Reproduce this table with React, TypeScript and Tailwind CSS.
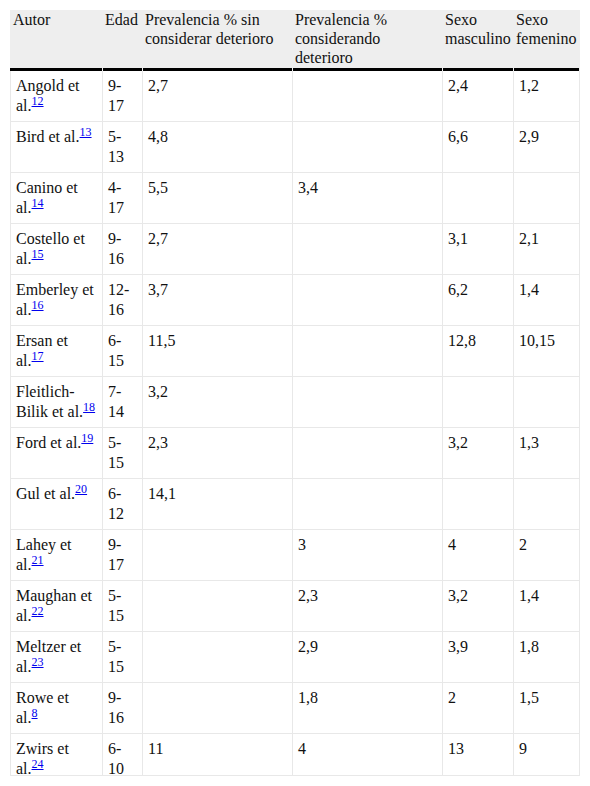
import React from 'react'

type Row = {
  autor: string[]
  ref: string
  edad: string
  sin: string
  con: string
  masc: string
  fem: string
}

// autor lines are split where the original column wraps
const ROWS: Row[] = [
  { autor: ['Angold et', 'al.'], ref: '12', edad: '9-17', sin: '2,7', con: '', masc: '2,4', fem: '1,2' },
  { autor: ['Bird et al.'], ref: '13', edad: '5-13', sin: '4,8', con: '', masc: '6,6', fem: '2,9' },
  { autor: ['Canino et', 'al.'], ref: '14', edad: '4-17', sin: '5,5', con: '3,4', masc: '', fem: '' },
  { autor: ['Costello et', 'al.'], ref: '15', edad: '9-16', sin: '2,7', con: '', masc: '3,1', fem: '2,1' },
  { autor: ['Emberley et', 'al.'], ref: '16', edad: '12-16', sin: '3,7', con: '', masc: '6,2', fem: '1,4' },
  { autor: ['Ersan et', 'al.'], ref: '17', edad: '6-15', sin: '11,5', con: '', masc: '12,8', fem: '10,15' },
  { autor: ['Fleitlich-', 'Bilik et al.'], ref: '18', edad: '7-14', sin: '3,2', con: '', masc: '', fem: '' },
  { autor: ['Ford et al.'], ref: '19', edad: '5-15', sin: '2,3', con: '', masc: '3,2', fem: '1,3' },
  { autor: ['Gul et al.'], ref: '20', edad: '6-12', sin: '14,1', con: '', masc: '', fem: '' },
  { autor: ['Lahey et', 'al.'], ref: '21', edad: '9-17', sin: '', con: '3', masc: '4', fem: '2' },
  { autor: ['Maughan et', 'al.'], ref: '22', edad: '5-15', sin: '', con: '2,3', masc: '3,2', fem: '1,4' },
  { autor: ['Meltzer et', 'al.'], ref: '23', edad: '5-15', sin: '', con: '2,9', masc: '3,9', fem: '1,8' },
  { autor: ['Rowe et', 'al.'], ref: '8', edad: '9-16', sin: '', con: '1,8', masc: '2', fem: '1,5' },
  { autor: ['Zwirs et', 'al.'], ref: '24', edad: '6-10', sin: '11', con: '4', masc: '13', fem: '9' },
]

const HEADERS = [
  ['Autor'],
  ['Edad'],
  ['Prevalencia % sin', 'considerar deterioro'],
  ['Prevalencia %', 'considerando', 'deterioro'],
  ['Sexo', 'masculino'],
  ['Sexo', 'femenino'],
]

const cell = 'border-r border-b border-[#e8e8e8] px-[5px] py-[5px] leading-[20px] whitespace-nowrap'

function Lines({ lines }: { lines: string[] }) {
  return (
    <>
      {lines.map((line, i) => (
        <React.Fragment key={i}>
          {i > 0 && <br />}
          {line}
        </React.Fragment>
      ))}
    </>
  )
}

export default function App() {
  return (
    <div className="bg-white w-[590px] h-[786px] pt-[10px] pl-[10px] font-[family-name:Liberation_Serif,serif] text-[16px] text-[#111]">
      <div className="w-[570px] h-[766px] overflow-hidden border-b border-[#e8e8e8]">
        <div className="grid grid-cols-[93px_40px_150px_150px_71px_66px]">
          {HEADERS.map((h, i) => (
            <div key={i} className="flex flex-col justify-between bg-[#eeeeee]">
              <div className={`h-[58px] leading-[19px] whitespace-nowrap ${i === 0 ? 'pl-[3px]' : 'pl-[2px]'}`}>
                <Lines lines={h} />
              </div>
              <div className="h-[3px] bg-black mr-px"></div>
            </div>
          ))}
          {ROWS.map(r => (
            <React.Fragment key={r.ref}>
              <div className={`${cell} border-l`}>
                <Lines lines={r.autor} />
                <a className="text-[12px] leading-[0] text-[#0000ee] underline relative -top-[6px]">{r.ref}</a>
              </div>
              <div className={cell}><Lines lines={[r.edad.split('-')[0] + '-', r.edad.split('-')[1]]} /></div>
              <div className={cell}>{r.sin}</div>
              <div className={cell}>{r.con}</div>
              <div className={cell}>{r.masc}</div>
              <div className={cell}>{r.fem}</div>
            </React.Fragment>
          ))}
        </div>
      </div>
    </div>
  )
}
